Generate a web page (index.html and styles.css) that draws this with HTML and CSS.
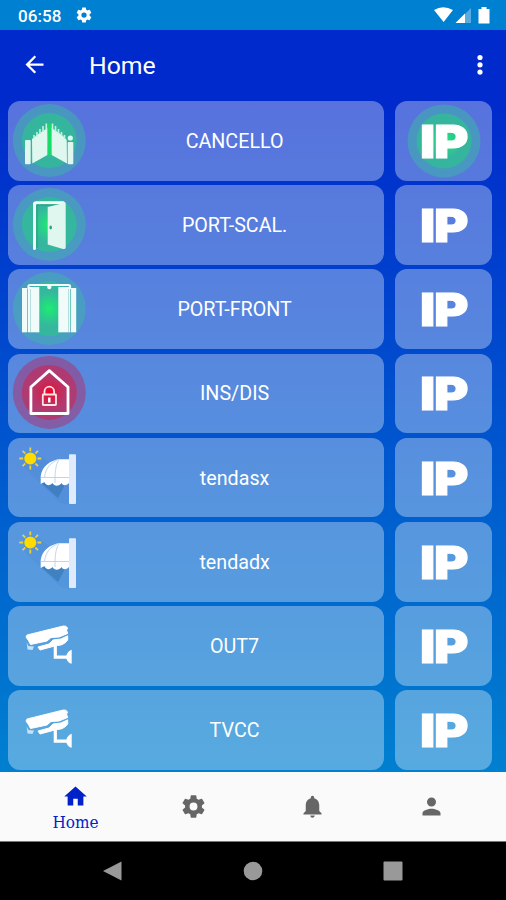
FILE: index.html
```html
<!DOCTYPE html>
<html lang="it">
<head>
<meta charset="utf-8">
<title>Home</title>
<link rel="stylesheet" href="styles.css">
</head>
<body>
<svg class="defs" aria-hidden="true">
  <defs>
    <radialGradient id="green-core"><stop offset="0" stop-color="#20eb73"/><stop offset=".3" stop-color="#22df7c" stop-opacity=".9"/><stop offset="1" stop-color="#25d888" stop-opacity="0"/></radialGradient>
    <radialGradient id="red-core"><stop offset="0" stop-color="#f00022"/><stop offset=".4" stop-color="#df173d" stop-opacity=".7"/><stop offset="1" stop-color="#c22c5b" stop-opacity="0"/></radialGradient>
    <symbol id="halo-green" viewBox="0 0 80 80"><circle cx="40" cy="40" r="36.500" fill="#3cb8a6" opacity=".5"/><circle cx="40" cy="40" r="27.500" fill="#2fbf92" opacity=".75"/><circle cx="40" cy="40" r="18" fill="url(#green-core)"/></symbol>
    <symbol id="halo-red" viewBox="0 0 80 80"><circle cx="40" cy="40" r="36.500" fill="#b02e6c" opacity=".5"/><circle cx="40" cy="40" r="27.500" fill="#c62a58" opacity=".65"/><circle cx="40" cy="40" r="20" fill="url(#red-core)"/></symbol>
    <symbol id="gear" viewBox="0 0 24 24"><path fill-rule="evenodd" d="M19.43 12.98c.04-.32.07-.64.07-.98s-.03-.66-.07-.98l2.11-1.65c.19-.15.24-.42.12-.64l-2-3.46c-.12-.22-.39-.3-.61-.22l-2.49 1c-.52-.4-1.08-.73-1.69-.98l-.38-2.65A.49.49 0 0 0 14 2h-4c-.25 0-.46.18-.49.42l-.38 2.65c-.61.25-1.17.59-1.69.98l-2.49-1c-.23-.09-.49 0-.61.22l-2 3.46c-.13.22-.07.49.12.64l2.11 1.65c-.04.32-.07.65-.07.98s.03.66.07.98l-2.11 1.65c-.19.15-.24.42-.12.64l2 3.46c.12.22.39.3.61.22l2.49-1c.52.4 1.08.73 1.69.98l.38 2.65c.03.24.24.42.49.42h4c.25 0 .46-.18.49-.42l.38-2.65c.61-.25 1.17-.59 1.69-.98l2.49 1c.23.09.49 0 .61-.22l2-3.46c.12-.22.07-.49-.12-.64zM12 15.5a3.5 3.5 0 1 1 0-7 3.5 3.5 0 0 1 0 7z"/></symbol>
    <symbol id="awning" viewBox="0 0 84 80">
      <path d="M14 27L27 13L61 40V67L51 64z" fill="#3f7fca" opacity=".16"/>
      <path d="M33 45H58L50 60z" fill="#2f73ad" opacity=".55"/>
      <path d="M22.3 9.5v22M11.3 20.5h22M14.6 12.8l15.4 15.4M30 12.8L14.6 28.2" stroke="#e8d13c" stroke-width="1.8"/>
      <circle cx="22.3" cy="20.5" r="7.2" fill="#5790d2"/><circle cx="22.3" cy="20.5" r="6" fill="#ffdb00"/>
      <path d="M32.7 46V38C34 28 43 22.3 51 21.3H61V45C58 48 55 48 53.5 45C51 48.5 46.500 48.500 44.500 45C42 48 38 48 36.500 44z" fill="#fff"/>
      <path d="M33 39.500H61M36.500 39C38 29 43 25 49 22M47 39C47.500 29 49 24 51 22M47 39v6" fill="none" stroke="#b5c9e9" stroke-width=".8"/>
      <rect x="61" y="16.200" width="7" height="49.700" rx="1" fill="#dfebfc"/>
    </symbol>
    <symbol id="camera" viewBox="0 0 84 80">
      <path d="M19 29L55.300 20Q58 19.500 59.700 22L58.500 24L59.700 27.500L51 31L43 31.500L39 35L22.500 38.500Q21 35 18 31z" fill="#fff" stroke="#fff" stroke-linejoin="round"/>
      <path d="M30 41L41 38L45 34L53 33L59.700 29.800V34Q57 38 53 39L48.700 39.500L32 44z" fill="#fff" stroke="#fff" stroke-linejoin="round"/>
      <path d="M18.700 36.500L20.500 40L26 40.500L24.500 44L19.500 43.500z" fill="#c4e2fa"/>
      <path d="M47.300 39V51.100H60" fill="none" stroke="#fff" stroke-width="3.200"/>
      <path d="M63.700 43.800V57.800Q60 57 58.500 53V49Q60 45 63.700 43.800z" fill="#fff"/>
    </symbol>
  </defs>
</svg>
<div class="phone">
  <header class="status">
    <span class="time">06:58</span>
    <svg class="status-gear"><use href="#gear"/></svg>
    <svg class="signals" viewBox="0 0 58 18">
      <path d="M1 4Q10-1.500 20 4L10.600 16z" fill="#fff"/>
      <path d="M38 2V17H23z" fill="#fff" opacity=".35"/><path d="M32 7.500V17H22.500z" fill="#fff"/>
      <path d="M46 3h2.500V1h5v2H56.500v14.500H45.500V3z" fill="#fff"/>
    </svg>
  </header>
  <div class="appbar">
    <svg class="back" viewBox="0 0 24 24"><path d="M20 11H7.830l5.590-5.590L12 4l-8 8 8 8 1.410-1.410L7.830 13H20z"/></svg>
    <h1 class="title">Home</h1>
    <svg class="more" viewBox="0 0 8 22"><circle cx="4" cy="3.500" r="2.600"/><circle cx="4" cy="10.800" r="2.600"/><circle cx="4" cy="18.100" r="2.600"/></svg>
  </div>
  <main class="devices">
    <div class="tile">
      <svg class="icon" viewBox="0 0 84 80"><use href="#halo-green" x="1.300" y="-.4" width="80" height="80"/>
        <g fill="#dff7ee"><rect x="17" y="39" width="5.700" height="24.200" rx="1"/><path d="M24 38L29 34L39.300 27V54L24.300 62.500z"/><path d="M43.700 27L54 34L58.700 39L59 62.500L43.700 54z"/><rect x="59.700" y="41" width="5.600" height="22.200" rx="1"/><circle cx="62.300" cy="37" r="2.600"/></g>
        <path d="M26 38V34M29 36V31M32 33V28M35 31V25M38.300 29V22.500M44.500 29V22.500M47.500 31V25M50.500 33V28M53.500 35V31M56.500 38V34" stroke="#c4f0df" stroke-width="1.600"/><path d="M41.500 23V54" stroke="#16dc65" stroke-width="2.600"/>
      </svg><span class="label">CANCELLO</span>
    </div>
    <div class="tile"><svg class="halo"><use href="#halo-green"/></svg><b class="ip">IP</b></div>

    <div class="tile">
      <svg class="icon" viewBox="0 0 84 80"><use href="#halo-green" x="1.300" y="-.4" width="80" height="80"/>
        <path d="M26.500 63.500V19Q26.500 17.700 28 17.700H55" fill="none" stroke="#effcf6" stroke-width="3" stroke-linecap="round"/><path d="M29 63V20H53" fill="none" stroke="#2a9b79" stroke-width="1"/>
        <path d="M39.700 22L54 18.500V16.500Q57.700 16 57.700 19V62.500Q57.700 64.500 55 64L39.700 59.500z" fill="#dff7ee"/><ellipse cx="42.700" cy="42.500" rx="1.300" ry="2" fill="#28a87b"/>
      </svg><span class="label">PORT-SCAL.</span>
    </div>
    <div class="tile"><b class="ip">IP</b></div>

    <div class="tile">
      <svg class="icon" viewBox="0 0 84 80"><use href="#halo-green" x="1.300" y="-.4" width="80" height="80"/>
        <g fill="#f1fbf9"><rect x="14" y="19" width="5.300" height="44.300"/><rect x="20" y="18" width="11.300" height="45.300"/><rect x="50.300" y="18" width="12" height="45.300"/><rect x="63" y="19" width="5.200" height="44.300"/></g>
        <path d="M20.500 20V17Q20.500 16 22 16H60.500Q62 16 62 17V20" fill="none" stroke="#f1fbf9" stroke-width="2.200"/><path d="M22.500 20V63M60.500 20V63" stroke="#b6dfe0"/><circle cx="41.300" cy="18" r="2.200" fill="#f1fbf9"/>
      </svg><span class="label">PORT-FRONT</span>
    </div>
    <div class="tile"><b class="ip">IP</b></div>

    <div class="tile">
      <svg class="icon" viewBox="0 0 84 80"><use href="#halo-red" x="1.300" y="-.6" width="80" height="80"/>
        <path d="M22.900 60.500V34L41.300 17.600L60 34V60.500z" fill="none" stroke="#fff" stroke-width="2.800" stroke-linejoin="round"/>
        <g fill="none" stroke="#ffe3e8" stroke-width="1.800"><rect x="34.800" y="41.500" width="13.200" height="10.500" rx=".5"/><path d="M36.500 41V38.500A4.800 4.800 0 0 1 46.100 38.500V41"/></g><path d="M41.300 44.500v5" stroke="#fff" stroke-width="2.500"/>
      </svg><span class="label">INS/DIS</span>
    </div>
    <div class="tile"><b class="ip">IP</b></div>

    <div class="tile"><svg class="icon"><use href="#awning"/></svg><span class="label">tendasx</span></div>
    <div class="tile"><b class="ip">IP</b></div>
    <div class="tile"><svg class="icon"><use href="#awning"/></svg><span class="label">tendadx</span></div>
    <div class="tile"><b class="ip">IP</b></div>
    <div class="tile"><svg class="icon"><use href="#camera"/></svg><span class="label">OUT7</span></div>
    <div class="tile"><b class="ip">IP</b></div>
    <div class="tile"><svg class="icon"><use href="#camera"/></svg><span class="label">TVCC</span></div>
    <div class="tile"><b class="ip">IP</b></div>
  </main>
  <nav class="tabs">
    <a class="tab active"><svg viewBox="0 0 24 24"><path d="M10 20v-6h4v6h5v-8h3L12 3 2 12h3v8z"/></svg><span>Home</span></a>
    <a class="tab"><svg><use href="#gear"/></svg></a>
    <a class="tab"><svg viewBox="0 0 24 24"><path d="M12 22c1.100 0 2-.9 2-2h-4a2 2 0 0 0 2 2zm6-6v-5c0-3.070-1.640-5.640-4.500-6.320V4c0-.83-.67-1.500-1.500-1.500s-1.500.67-1.500 1.500v.68C7.630 5.360 6 7.920 6 11v5l-2 2v1h16v-1z"/></svg></a>
    <a class="tab"><svg viewBox="0 0 24 24"><path d="M12 12a4 4 0 1 0 0-8 4 4 0 0 0 0 8zm0 2c-2.670 0-8 1.340-8 4v2h16v-2c0-2.660-5.330-4-8-4z"/></svg></a>
  </nav>
  <footer class="sysnav">
    <svg viewBox="0 0 24 24"><path d="M20.500 2.500v19L2 12z"/></svg>
    <svg viewBox="0 0 24 24"><circle cx="12" cy="12" r="9.300"/></svg>
    <svg viewBox="0 0 24 24"><rect x="2.500" y="2.500" width="19" height="19" rx="1"/></svg>
  </footer>
</div>
</body>
</html>
```
FILE: styles.css
```css
* { box-sizing: border-box; }
body { margin: 0; font-family: Roboto, "Liberation Sans", sans-serif; }
.defs { display: block; width: 0; height: 0; }
.phone { display: flex; flex-direction: column; width: 506px; height: 900px; overflow: hidden; background: #000; }

.status { display: flex; align-items: center; height: 30px; padding: 0 15px 0 18px; background: #0080d0; color: #fff; }
.time { font-size: 17px; font-weight: 500; line-height: 30px; letter-spacing: .1px; padding-top: 1px; }
.status-gear { width: 18px; height: 18px; margin-left: 13px; fill: #fff; }
.signals { width: 58px; height: 18px; margin-left: auto; }

.appbar { display: flex; align-items: center; height: 71px; padding: 0 22px 2px; background: #002acc; color: #fff; }
.back { width: 27px; height: 27px; margin-left: -1px; fill: #fff; }
.title { margin: 3px 0 0 41px; font-size: 24.800px; font-weight: 400; line-height: 30px; }
.more { width: 8px; height: 22px; margin-left: auto; fill: #fff; }

.devices { display: grid; grid-template-columns: 376px 97px; grid-auto-rows: 79.600px; gap: 4.600px 11px; height: 671px; padding-left: 7.600px; background: linear-gradient(#002acc, #0080d0); }
.tile { position: relative; display: flex; align-items: center; border-radius: 12px; background: rgba(255, 255, 255, .34); color: #fff; }
.icon { flex: none; width: 84px; height: 80px; }
.label { flex: 1; margin: 2px 6px 0 0; text-align: center; font-size: 19.700px; line-height: 24px; }
.halo { position: absolute; left: 9px; top: 0; width: 80px; height: 80px; }
.ip { position: relative; width: 97px; text-align: center; font-family: Inter, sans-serif; font-size: 46px; font-weight: 900; line-height: 80px; letter-spacing: -1.200px; -webkit-text-stroke: 1px #fff; transform: scaleX(1.140); }

.tabs { display: grid; grid-template-columns: repeat(4, 118.700px); justify-content: center; height: 70px; background: #fafafa; border-bottom: 1px solid #777; }
.tab { display: flex; flex-direction: column; align-items: center; justify-content: center; color: #666; }
.tab svg { width: 27px; height: 27px; fill: currentColor; }
.active { color: #0022c8; padding: 3px 0 0 1px; }
.tab span { font-family: "DejaVu Serif Condensed", "DejaVu Serif", serif; font-stretch: condensed; font-size: 17px; line-height: 24px; }

.sysnav { display: flex; justify-content: space-between; padding: 17px 101px 0 101px; height: 58px; }
.sysnav svg { width: 24px; height: 24px; fill: #999; }
```
